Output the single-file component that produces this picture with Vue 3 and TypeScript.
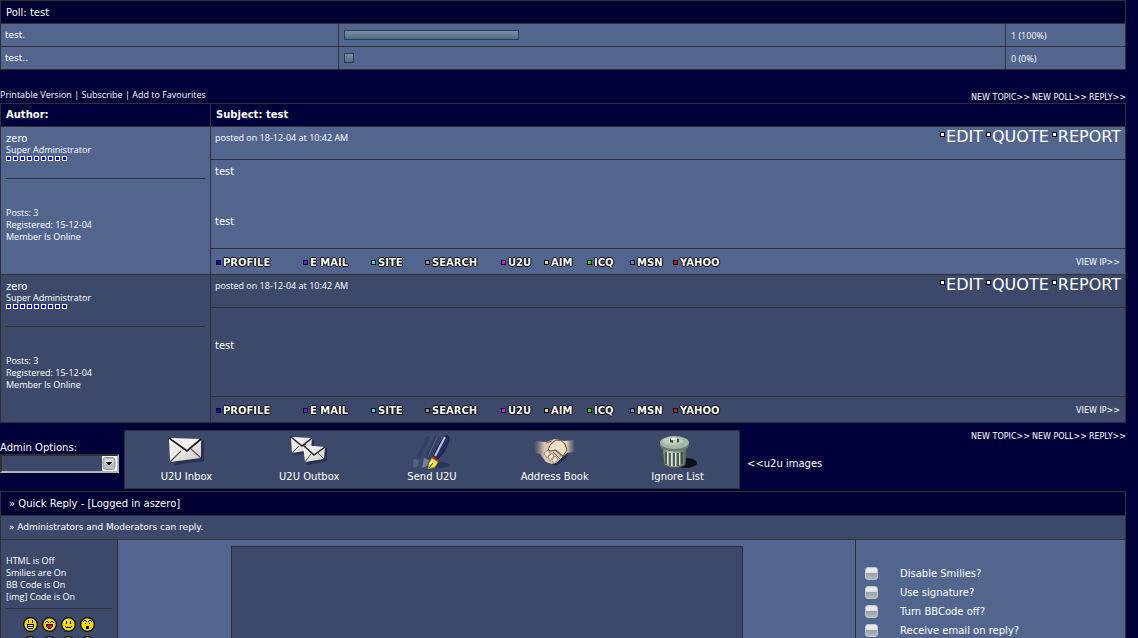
<script setup lang="ts">
import { ref } from 'vue'

interface PollOption { label: string; votes: number; percent: number }
interface Post { id: number; alt: boolean; lines: string[] }

const pollOptions: PollOption[] = [
  { label: 'test.', votes: 1, percent: 100 },
  { label: 'test..', votes: 0, percent: 0 },
]
const posts: Post[] = [
  { id: 1, alt: false, lines: ['test', 'test'] },
  { id: 2, alt: true, lines: ['test'] },
]
const contacts = [
  { name: 'PROFILE', tone: 'blue' },
  { name: 'E MAIL', tone: 'violet' },
  { name: 'SITE', tone: 'cyan' },
  { name: 'SEARCH', tone: 'grey' },
  { name: 'U2U', tone: 'magenta' },
  { name: 'AIM', tone: 'gold' },
  { name: 'ICQ', tone: 'green' },
  { name: 'MSN', tone: 'slate' },
  { name: 'YAHOO', tone: 'red' },
]
const threadActions = ['NEW TOPIC>>', 'NEW POLL>>', 'REPLY>>']
const u2u = ['U2U Inbox', 'U2U Outbox', 'Send U2U', 'Address Book', 'Ignore List']
const states = ['HTML is Off', 'Smilies are On', 'BB Code is On', '[img] Code is On']
const toggles = ref([
  { id: 'smilies', label: 'Disable Smilies?', on: false },
  { id: 'signature', label: 'Use signature?', on: false },
  { id: 'bbcode', label: 'Turn BBCode off?', on: false },
  { id: 'notify', label: 'Receive email on reply?', on: false },
])
const adminAction = ref('')
const message = ref('')
const barWidth = (percent: number): string => `${Math.max(10, percent * 1.75)}px`
</script>

<template>
  <div class="page">
    <main class="board">
      <table class="poll">
        <colgroup>
          <col class="col-label" />
          <col />
          <col class="col-count" />
        </colgroup>
        <thead>
          <tr><th colspan="3">Poll: test</th></tr>
        </thead>
        <tbody>
          <tr v-for="option in pollOptions" :key="option.label">
            <td class="poll-label">{{ option.label }}</td>
            <td><div class="bar" :style="{ width: barWidth(option.percent) }"></div></td>
            <td class="poll-count">{{ option.votes }} ({{ option.percent }}%)</td>
          </tr>
        </tbody>
      </table>

      <div class="thread-bar">
        <nav class="thread-links">
          <a href="#">Printable Version</a> | <a href="#">Subscribe</a> | <a href="#">Add to Favourites</a>
        </nav>
        <nav class="thread-actions">
          <a v-for="action in threadActions" :key="action" href="#">{{ action }}</a>
        </nav>
      </div>

      <section class="thread">
        <header class="thread-head">
          <div>Author:</div>
          <div>Subject: test</div>
        </header>
        <article v-for="post in posts" :key="post.id" class="post" :class="{ alt: post.alt }">
          <aside class="author">
            <a class="author-name" href="#">zero</a>
            <div class="author-title">Super Administrator</div>
            <div class="rank"><i v-for="n in 9" :key="n"></i></div>
            <hr />
            <div class="author-stats">
              <div>Posts: 3</div>
              <div>Registered: 15-12-04</div>
              <div>Member Is Online</div>
            </div>
          </aside>
          <div class="post-main">
            <div class="post-top">
              <span class="posted">posted on 18-12-04 at 10:42 AM</span>
              <nav class="post-actions">
                <a v-for="name in ['EDIT', 'QUOTE', 'REPORT']" :key="name" href="#"><i></i>{{ name }}</a>
              </nav>
            </div>
            <div class="post-body">
              <p v-for="(line, i) in post.lines" :key="i">{{ line }}</p>
            </div>
            <div class="post-foot">
              <nav class="contacts">
                <a v-for="c in contacts" :key="c.name" href="#"><i :class="c.tone"></i>{{ c.name }}</a>
              </nav>
              <a class="view-ip" href="#">VIEW IP&gt;&gt;</a>
            </div>
          </div>
        </article>
      </section>

      <section class="tools">
        <div class="admin">
          <label for="admin-options">Admin Options:</label>
          <div class="select-box">
            <select id="admin-options" v-model="adminAction"><option value=""></option></select>
            <svg class="select-arrow" width="15" height="15" viewBox="0 0 15 15" aria-hidden="true">
              <rect width="15" height="15" fill="#fff" />
              <rect x="1" y="1.500" width="12" height="12" rx="3" fill="#b9bec6" stroke="#8d929b" />
              <path d="M3 3.500h8v4H3z" fill="#dfe2e7" />
              <path d="M4 6h6v1H9v1H8v1H6V8H5V7H4z" fill="#000" />
            </svg>
          </div>
        </div>
        <nav class="u2u">
          <a v-for="(name, i) in u2u" :key="name" href="#">
            <svg v-if="i === 0" width="44" height="34" viewBox="0 0 44 34" aria-hidden="true">
              <defs><linearGradient id="paper" x1="0" y1="0" x2="1" y2="1"><stop stop-color="#fff" /><stop offset="1" stop-color="#cfccc8" /></linearGradient></defs>
              <path d="M8 6l32 0 0 20-29 4z" fill="#17213f" opacity=".55" />
              <path d="M5 3L37 4 37 23 6 27z" fill="url(#paper)" />
              <path d="M6 27l11-11M37 23L27 14" stroke="#55514c" stroke-width="1.200" fill="none" />
              <path d="M5 3l18 13L37 4" stroke="#1c1c1e" stroke-width="1.700" fill="none" />
              <path d="M8 4l15 9L34 5z" fill="#f5f4f2" />
            </svg>
            <svg v-else-if="i === 1" width="44" height="34" viewBox="0 0 44 34" aria-hidden="true">
              <path d="M6 5h21v13L6 20z" fill="#17213f" opacity=".55" />
              <path d="M4 2L25 3 24 15 5 18z" fill="url(#paper)" />
              <path d="M5 18l7-7M24 15l-6-6" stroke="#55514c" fill="none" />
              <path d="M4 2l11 9L25 3" stroke="#222" stroke-width="1.500" fill="none" />
              <path d="M18 13l22 0 0 13-20 4z" fill="#17213f" opacity=".6" />
              <path d="M16 10L38 12 37 24 18 27z" fill="url(#paper)" />
              <path d="M18 27l6-8M37 24l-6-6" stroke="#55514c" fill="none" />
              <path d="M16 10l11 10L38 12" stroke="#222" stroke-width="1.500" fill="none" />
            </svg>
            <svg v-else-if="i === 2" width="44" height="34" viewBox="0 0 44 34" aria-hidden="true">
              <ellipse cx="31" cy="30" rx="9" ry="3" fill="#29365a" />
              <g opacity=".25"><path d="M17 1l3 1-10 22-4-2z" fill="#1c274e" /><path d="M4 24l5 1-1 6-4 2-1-3z" fill="#a0a6b5" /></g>
              <g opacity=".55"><path d="M25 1l4 1-9 21-5-1z" fill="#27335f" /><path d="M27 2l-9 20" stroke="#7582a6" /><path d="M14 23l5 2-2 6-5 2z" fill="#a9adb7" /></g>
              <path d="M34 2q4-3 5 1 0 5-5 13l-6 8-5-2q3-10 11-20z" fill="#242f63" stroke="#151b38" />
              <path d="M35 2L25 21" stroke="#bac2de" stroke-width="2" />
              <path d="M23 21l6 4-1 2-6-4z" fill="#c11929" />
              <path d="M22 23l6 4-3 5-7 2 1-6z" fill="#f3e73b" stroke="#95902d" stroke-width=".7" />
              <path d="M19 33l4-5" stroke="#282820" />
              <path d="M20 28l3-3-1 4z" fill="#fff9b4" />
            </svg>
            <svg v-else-if="i === 3" width="44" height="34" viewBox="0 0 44 34" aria-hidden="true">
              <defs>
                <linearGradient id="arm"><stop stop-color="#b9a596" stop-opacity="0" /><stop offset=".25" stop-color="#d8c3ad" /><stop offset=".8" stop-color="#e2cdb5" /><stop offset="1" stop-color="#b09b8b" stop-opacity="0" /></linearGradient>
              </defs>
              <path d="M7 16l8 11 8 4 10-8 3-7z" fill="#18223e" opacity=".7" />
              <path d="M1 6l12 1 9-3 9 2 11-1v12l-8 1-10 9-5 2-6-2-6-8-6-2z" fill="url(#arm)" />
              <path d="M14 8l-3 10 5 8 7 2 9-9-4-10-7-4z" fill="#dcc5ab" />
              <path d="M23 5q5-1 9 4l2 6-4 6-7-6-6 1-2-2 3-5z" fill="#efddc5" stroke="#644d3d" />
              <path d="M11 18l4-3 2 3-3 5zM15 22l4-4 2 3-4 5zM19 25l3-4 3 3-4 5z" fill="#f2e4ce" stroke="#8a6e57" stroke-width=".7" />
              <path d="M22 15l8 7M20 17l7 7M13 8l6-2" stroke="#735b49" fill="none" />
            </svg>
            <svg v-else width="44" height="34" viewBox="0 0 44 34" aria-hidden="true">
              <defs><linearGradient id="tin"><stop stop-color="#64746a" /><stop offset=".35" stop-color="#bbcbb9" /><stop offset="1" stop-color="#56655d" /></linearGradient></defs>
              <ellipse cx="30" cy="28" rx="11" ry="5" fill="#0c0f16" />
              <path d="M6 12h25l-2 18q-10 5-21 0z" fill="url(#tin)" stroke="#46534d" />
              <path d="M10 17v12M14 18v13M18 18v13M22 18v13M26 17v12" stroke="#36463e" stroke-width="1.500" />
              <path d="M11.500 17v12M15.500 18v13M19.500 18v13M23.500 18v12" stroke="#dce6d8" stroke-width="1" />
              <ellipse cx="18.500" cy="10" rx="14.500" ry="6.500" fill="#697c70" />
              <ellipse cx="18.500" cy="7.500" rx="14.500" ry="6.500" fill="#a5b8a5" />
              <ellipse cx="17" cy="6" rx="10" ry="4" fill="#c0cfbd" />
              <path d="M14 7V4q4-2 9 0v3l-2 1V5l-4 0v3z" fill="#435148" /><path d="M15 3h6v2h-6z" fill="#f0f4ec" />
            </svg>
            <span>{{ name }}</span>
          </a>
        </nav>
        <span class="u2u-note">&lt;&lt;u2u images</span>
        <nav class="thread-actions">
          <a v-for="action in threadActions" :key="action" href="#">{{ action }}</a>
        </nav>
      </section>

      <form class="reply" @submit.prevent>
        <header class="reply-head">» Quick Reply - [Logged in aszero]</header>
        <div class="reply-sub">» Administrators and Moderators can reply.</div>
        <aside class="reply-side">
          <div v-for="state in states" :key="state">{{ state }}</div>
          <hr />
          <div class="smilies">
            <button v-for="n in 8" :key="n" type="button" :aria-label="`Smiley ${n}`">
              <svg width="15" height="15" viewBox="0 0 15 15" aria-hidden="true">
                <circle cx="7.500" cy="7.500" r="6.800" fill="#f4d800" stroke="#090909" stroke-width="1.200" />
                <path d="M3 6q1-3 4-3.500" stroke="#fff56a" fill="none" />
                <g shape-rendering="crispEdges">
                  <template v-if="n % 4 === 1">
                    <path d="M5 3h1v3H5zM9 3h1v3H9z" fill="#000" />
                    <path d="M4 7h7v4h-1v1H5v-1H4z" fill="#000" /><path d="M5 8h5v1H5zM5 10h5v1H5z" fill="#fff" />
                  </template>
                  <template v-else-if="n % 4 === 2">
                    <path d="M3 5h1V4h2v1h1v1H6V5H4v1H3zM8 5h1V4h2v1h1v1h-1V5H9v1H8z" fill="#000" />
                    <path d="M4 7h7v3h-1v1H9v1H6v-1H5v-1H4z" fill="#2b0000" /><path d="M5 8h5v2H9v1H6v-1H5z" fill="#e01010" />
                  </template>
                  <template v-else-if="n % 4 === 3">
                    <path d="M5 4h1v3H5zM9 4h1v3H9zM4 9h1v1H4zM10 9h1v1h-1zM5 10h5v1H5z" fill="#000" />
                  </template>
                  <template v-else>
                    <path d="M3 4h1V3h2v1h1v1H6V4H4v1H3zM8 4h1V3h2v1h1v1h-1V4H9v1H8zM5 6h1v1H5zM9 6h1v1H9z" fill="#000" />
                    <path d="M6 9h3v3H6z" fill="#000" />
                  </template>
                </g>
              </svg>
            </button>
          </div>
        </aside>
        <div class="reply-editor">
          <textarea v-model="message" aria-label="Message"></textarea>
        </div>
        <div class="reply-options">
          <div v-for="t in toggles" :key="t.id">
            <input :id="t.id" v-model="t.on" type="checkbox" />
            <label :for="t.id">{{ t.label }}</label>
          </div>
        </div>
      </form>
    </main>
  </div>
</template>

<style>
body {
  margin: 0;
  background: #00003b;
}
</style>

<style scoped>
.page {
  --line: #303030;
  --light: #52658f;
  --dark: #3c496b;
  --deep: #000033;
  --narrow: 9px "Open Sans", "Noto Sans", sans-serif;
  height: 100vh;
  overflow: hidden;
  box-sizing: border-box;
  padding-right: 12px;
  background: #00003b;
  color: #fff;
  font: 10px "DejaVu Sans", sans-serif;
}
a {
  color: inherit;
  text-decoration: none;
}
hr {
  border: 0;
  height: 1px;
  background: var(--line);
}
.poll {
  width: 100%;
  table-layout: fixed;
  border-spacing: 1px;
  background: var(--line);
}
.col-label {
  width: 30%;
}
.col-count {
  width: 119px;
}
.poll th,
.poll td {
  height: 22px;
  padding: 0 5px;
  text-align: left;
  font-weight: normal;
  background: var(--light);
}
.poll th {
  background: var(--deep);
}
.poll td {
  font-size: 9px;
}
.poll tbody .poll-label {
  padding: 0 4px;
}
.poll .poll-count {
  font: var(--narrow);
}
.bar {
  box-sizing: border-box;
  height: 10px;
  border: 1px solid #2b3e4c;
  background: linear-gradient(#7890aa, #4e6c82);
}
.thread-bar {
  height: 33px;
  display: flex;
  justify-content: space-between;
  align-items: flex-end;
}
.thread-links {
  font: var(--narrow);
  line-height: 12px;
  padding-bottom: 2px;
}
.thread-actions {
  display: flex;
  gap: 2px;
  font-size: 8px;
  line-height: 10px;
}
.thread {
  display: grid;
  gap: 1px;
  padding: 1px;
  background: var(--line);
}
.thread-head,
.post {
  display: grid;
  grid-template-columns: 209px 1fr;
  gap: 1px;
}
.thread-head > div {
  padding: 0 5px;
  line-height: 22px;
  font-weight: bold;
  background: #00003b;
}
.author,
.post-main > div {
  background: var(--light);
}
.alt .author,
.alt .post-main > div {
  background: var(--dark);
}
.author {
  padding: 6px 5px 0;
}
.author-name {
  display: block;
  line-height: 12px;
}
.author-title {
  font: var(--narrow);
  line-height: 10px;
}
.rank {
  display: flex;
  gap: 2px;
  padding-top: 1px;
}
.rank i {
  width: 3px;
  height: 3px;
  border: 1px solid #fff;
  background: #0000f0;
}
.author hr {
  margin: 17px 0 28px;
}
.author-stats {
  font: var(--narrow);
  line-height: 12px;
}
.post-main {
  display: grid;
  grid-template-rows: 32px 88px 25px;
  gap: 1px;
}
.post-top {
  display: flex;
  justify-content: space-between;
  padding: 0 4px;
}
.posted {
  font: var(--narrow);
  line-height: 22px;
}
.post-actions {
  display: flex;
  gap: 3px;
  font-size: 16px;
  line-height: 20px;
}
.post-actions a {
  display: flex;
  gap: 1px;
}
.post-actions i {
  width: 3px;
  height: 3px;
  margin-top: 5px;
  border: 1px solid #000;
  background: #fff;
}
.post-body {
  padding: 6px 4px 0;
}
.post-body p {
  margin: 0 0 38px;
  line-height: 12px;
}
.alt .post-body p {
  margin-top: 26px;
}
.post-foot {
  display: flex;
  justify-content: space-between;
  align-items: center;
  padding: 2px 5px 0;
}
.contacts {
  display: grid;
  grid-template-columns: 87px 68px 54px 76px repeat(4, 43px) auto;
  font-size: 10px;
  font-weight: bold;
  line-height: 12px;
  text-shadow: 1px 0 #000, -1px 0 #000, 0 1px #000, 0 -1px #000;
}
.contacts a {
  display: flex;
  align-items: center;
  gap: 2px;
}
.contacts i {
  width: 3px;
  height: 3px;
  border: 1px solid #000;
}
.blue { background: #0000f0; }
.violet { background: #9000ff; }
.cyan { background: #00f6ff; }
.grey { background: #969696; }
.magenta { background: #ff00ff; }
.gold { background: #ffd75a; }
.green { background: #00f000; }
.slate { background: #6e82e6; }
.red { background: #f00000; }
.view-ip {
  font-size: 8px;
}
.tools {
  display: flex;
  align-items: flex-start;
  padding: 7px 0 2px;
}
.admin {
  width: 119px;
  margin-right: 5px;
  padding-top: 12px;
}
.admin label {
  display: block;
  line-height: 12px;
}
.select-box {
  position: relative;
}
.select-box select {
  display: block;
  width: 100%;
  height: 19px;
  appearance: none;
  border: 2px solid;
  border-color: #303030 #b4b4b4 #b4b4b4 #303030;
  border-radius: 0;
  background: var(--dark);
  color: inherit;
  font: inherit;
}
.select-arrow {
  position: absolute;
  right: 2px;
  top: 2px;
  pointer-events: none;
}
.u2u {
  display: grid;
  grid-template-columns: repeat(5, 1fr);
  box-sizing: border-box;
  width: 616px;
  height: 59px;
  border: 1px solid var(--line);
  background: var(--dark);
}
.u2u a {
  display: flex;
  flex-direction: column;
  align-items: center;
  padding-top: 4px;
  line-height: 14px;
}
.u2u span {
  padding-top: 1px;
}
.u2u-note {
  margin-left: 7px;
  padding-top: 27px;
  line-height: 14px;
}
.tools .thread-actions {
  margin-left: auto;
  padding-top: 2px;
}
.reply {
  display: grid;
  grid-template-columns: 116px 1fr 269px;
  grid-template-rows: 23px 23px auto;
  gap: 1px;
  padding: 1px;
  background: var(--line);
}
.reply-head,
.reply-sub {
  grid-column: 1 / -1;
  padding: 0 8px;
  line-height: 23px;
}
.reply-head {
  background: var(--deep);
}
.reply-sub {
  font-size: 9px;
}
.reply-sub,
.reply-side {
  background: var(--dark);
}
.reply-side {
  padding: 15px 5px;
  font: var(--narrow);
  line-height: 12px;
}
.reply-side hr {
  margin: 5px 0 8px;
}
.smilies {
  display: grid;
  grid-template-columns: repeat(4, 15px);
  justify-content: center;
  gap: 4px;
}
.smilies button {
  display: block;
  padding: 0;
  border: 0;
  background: none;
}
.smilies svg {
  display: block;
}
.reply-editor {
  padding-top: 6px;
  background: var(--light);
  text-align: center;
}
.reply-editor textarea {
  box-sizing: border-box;
  width: 512px;
  max-width: 100%;
  height: 160px;
  border: 1px solid var(--line);
  border-radius: 0;
  background: var(--dark);
  color: inherit;
  resize: none;
}
.reply-options {
  padding: 24px 9px 0;
  background: var(--light);
}
.reply-options div {
  display: flex;
  align-items: center;
  gap: 22px;
  height: 19px;
}
.reply-options input {
  appearance: none;
  box-sizing: border-box;
  width: 13px;
  height: 13px;
  margin: 0;
  border: 1px solid #c3c6cd;
  border-radius: 3px;
  background: linear-gradient(#e9e9ea 40%, #9ba0a8 45%, #b3b7bd);
}
</style>
